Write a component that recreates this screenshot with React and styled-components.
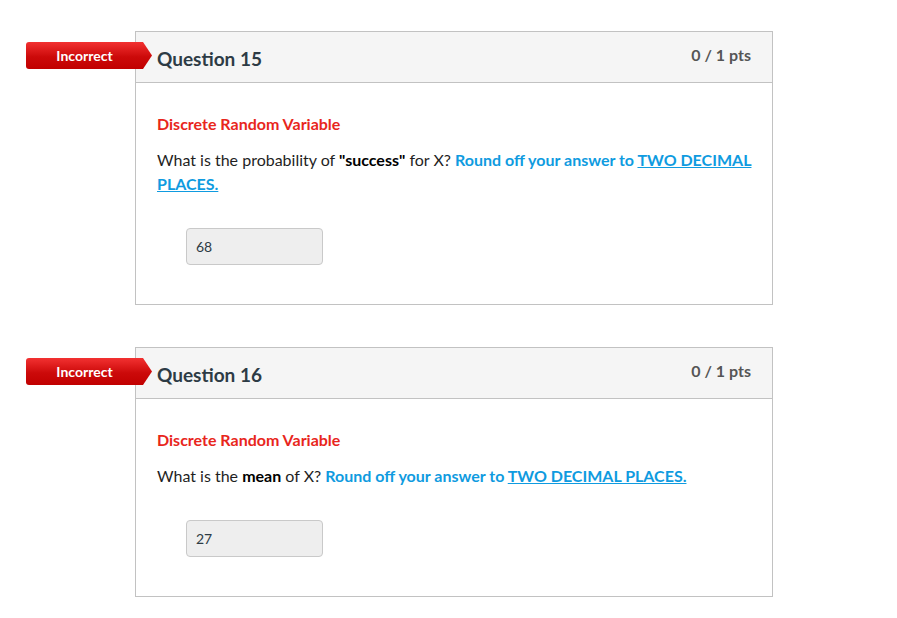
import React from 'react';
import styled, { createGlobalStyle } from 'styled-components';

const GlobalStyle = createGlobalStyle`
  body {
    margin: 0;
    background: #fff;
    font-family: Lato, "Liberation Sans", sans-serif;
  }
`;

const Page = styled.div`
  padding: 31px 0 20px 135px;
  display: flex;
  flex-direction: column;
  gap: 42px;
`;

const Card = styled.div`
  position: relative;
  width: 636px;
  border: 1px solid #c2c2c2;
  background: #fff;
`;

const Header = styled.div`
  height: 50px;
  background: #f5f5f5;
  border-bottom: 1px solid #c2c2c2;
  display: flex;
  justify-content: space-between;
  align-items: flex-start;
  padding: 0 21px;
`;

const Title = styled.h2`
  margin: 0;
  padding-top: 15px;
  font-size: 19px;
  line-height: 24px;
  font-weight: 700;
  color: #2d3b45;
`;

const Points = styled.span`
  padding-top: 12px;
  font-size: 16px;
  line-height: 22px;
  font-weight: 700;
  color: #555;
`;

const Badge = styled.div`
  position: absolute;
  left: -110px;
  top: 10px;
  width: 126px;
  height: 27px;
  padding-right: 9px;
  box-sizing: border-box;
  display: flex;
  align-items: center;
  justify-content: center;
  border-radius: 3px 0 0 3px;
  background: linear-gradient(#f23131, #cc0a0a 55%, #c10000);
  clip-path: polygon(0 0, calc(100% - 9px) 0, 100% 50%, calc(100% - 9px) 100%, 0 100%);
  color: #fff;
  font-size: 14px;
  font-weight: 700;
`;

const Body = styled.div`
  padding: 29px 14px 39px 21px;
`;

const Topic = styled.div`
  font-size: 16px;
  line-height: 24px;
  font-weight: 700;
  color: #e8261c;
`;

const Prompt = styled.p`
  margin: 12px 0 0;
  font-size: 16px;
  line-height: 24px;
  color: #1f1f1f;

  b {
    color: #000;
  }
`;

const Hint = styled.span`
  font-weight: 700;
  color: #0f9be0;
`;

const Emph = styled.span`
  text-decoration: underline;
`;

const Answer = styled.div`
  margin: 32px 0 0 29px;
  width: 137px;
  height: 37px;
  box-sizing: border-box;
  border: 1px solid #c9c9c9;
  border-radius: 4px;
  background: #eee;
  padding-left: 9px;
  display: flex;
  align-items: center;
  font-size: 14px;
  color: #2d3b45;
`;

const questions = [
  {
    num: 15,
    answer: '68',
    text: (
      <>
        What is the probability of <b>"success"</b> for X?{' '}
      </>
    ),
  },
  {
    num: 16,
    answer: '27',
    text: (
      <>
        What is the <b>mean</b> of X?{' '}
      </>
    ),
  },
];

const Question = ({ num, answer, text }) => (
  <Card>
    <Badge>Incorrect</Badge>
    <Header>
      <Title>Question {num}</Title>
      <Points>0 / 1 pts</Points>
    </Header>
    <Body>
      <Topic>Discrete Random Variable</Topic>
      <Prompt>
        {text}
        <Hint>
          Round off your answer to <Emph>TWO DECIMAL PLACES.</Emph>
        </Hint>
      </Prompt>
      <Answer>{answer}</Answer>
    </Body>
  </Card>
);

export default function App() {
  return (
    <>
      <GlobalStyle />
      <Page>
        {questions.map((q) => (
          <Question key={q.num} {...q} />
        ))}
      </Page>
    </>
  );
}
